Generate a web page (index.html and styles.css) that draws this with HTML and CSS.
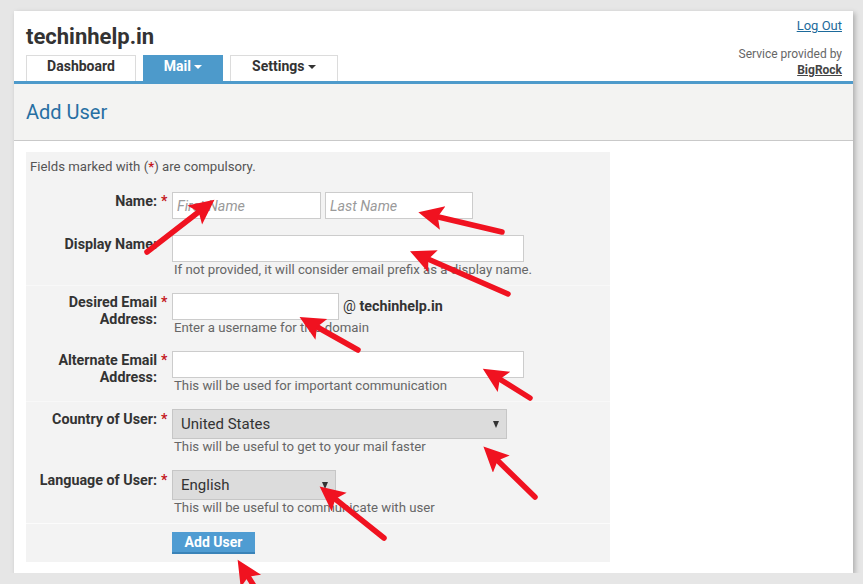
FILE: index.html
```html
<!DOCTYPE html>
<html lang="en">

<head>
    <meta charset="UTF-8">
    <meta name="viewport" content="width=device-width, initial-scale=1.0">
    <title>Add User</title>
    <link rel="stylesheet" href="styles.css">
</head>

<body>
    <div class="page">
        <div class="header">
            <div class="header-left">
                <div class="brand">techinhelp.in</div>
                <div class="tabs">
                    <a class="tab tab-dashboard">Dashboard</a>
                    <a class="tab tab-mail active">Mail <span class="caret"></span></a>
                    <a class="tab tab-settings">Settings <span class="caret"></span></a>
                </div>
            </div>
            <div class="header-right">
                <a class="logout">Log Out</a>
                <div class="service">Service provided by</div>
                <a class="provider">BigRock</a>
            </div>
        </div>

        <div class="title-bar">
            <h1>Add User</h1>
        </div>

        <div class="content">
            <form class="user-form">
                <p class="intro">Fields marked with (<span class="star">*</span>) are compulsory.</p>

                <div class="row">
                    <label class="label">Name:</label>
                    <span class="star">*</span>
                    <div class="field">
                        <input type="text" class="input w-name" placeholder="First Name">
                        <input type="text" class="input w-name-last" placeholder="Last Name">
                    </div>
                </div>

                <div class="row">
                    <label class="label">Display Name:</label>
                    <span class="star"></span>
                    <div class="field">
                        <input type="text" class="input w-wide">
                        <div class="hint">If not provided, it will consider email prefix as a display name.</div>
                    </div>
                </div>

                <div class="row sep">
                    <label class="label">Desired Email<br>Address:</label>
                    <span class="star">*</span>
                    <div class="field">
                        <input type="text" class="input w-user"><span class="domain">@ <b>techinhelp.in</b></span>
                        <div class="hint">Enter a username for this domain</div>
                    </div>
                </div>

                <div class="row">
                    <label class="label">Alternate Email<br>Address:</label>
                    <span class="star">*</span>
                    <div class="field">
                        <input type="text" class="input w-wide">
                        <div class="hint">This will be used for important communication</div>
                    </div>
                </div>

                <div class="row sep">
                    <label class="label label-select">Country of User:</label>
                    <span class="star star-select">*</span>
                    <div class="field">
                        <span class="select-wrap w-country">
                            <select class="select">
                                <option>United States</option>
                            </select>
                        </span>
                        <div class="hint">This will be useful to get to your mail faster</div>
                    </div>
                </div>

                <div class="row">
                    <label class="label label-select">Language of User:</label>
                    <span class="star star-select">*</span>
                    <div class="field">
                        <span class="select-wrap w-lang">
                            <select class="select">
                                <option>English</option>
                            </select>
                        </span>
                        <div class="hint">This will be useful to communicate with user</div>
                    </div>
                </div>

                <div class="row row-submit">
                    <span></span>
                    <span></span>
                    <div class="field">
                        <input type="submit" class="btn" value="Add User">
                    </div>
                </div>
            </form>
        </div>
    </div>

    <!-- red pointers drawn on top of the form -->
    <svg class="marks" width="863" height="584" viewBox="0 0 863 584">
        <defs>
            <marker id="head" markerUnits="userSpaceOnUse" markerWidth="28" markerHeight="26"
                refX="13" refY="12" orient="auto">
                <path d="M0,0 L25,12 L0,24 L5,12 z" fill="#f01220" />
            </marker>
        </defs>
        <g stroke="#f01220" stroke-width="5.5" stroke-linecap="round" marker-end="url(#head)">
            <line x1="147" y1="252" x2="205" y2="207" />
            <line x1="502" y1="232" x2="430" y2="215" />
            <line x1="508" y1="294" x2="421" y2="256" />
            <line x1="358" y1="350" x2="310" y2="323" />
            <line x1="530" y1="398" x2="493" y2="375" />
            <line x1="535" y1="497" x2="492" y2="455" />
            <line x1="384" y1="538" x2="329" y2="494" />
            <line x1="254" y1="586" x2="244" y2="570" />
        </g>
    </svg>
</body>

</html>
```

FILE: styles.css
```css
body {
    margin: 0;
    background-color: #e6e6e6;
    font-family: Roboto, "Liberation Sans", Arial, sans-serif;
    color: #333;
}

.page {
    margin: 11px 0 0 14px;
    width: 839px;
    height: 562px;
    background-color: #fff;
    box-shadow: 2px 2px 5px rgba(0, 0, 0, 0.25);
}

/* header */
.header {
    display: flex;
    justify-content: space-between;
    align-items: flex-start;
    padding: 0 11px 0 12px;
    border-bottom: 3px solid #4d9acb;
}

.header-left {
    padding-top: 13px;
}

.brand {
    font-size: 22px;
    font-weight: bold;
    line-height: 26px;
    color: #333;
}

.tabs {
    display: flex;
    gap: 7px;
    margin-top: 5px;
}

.tab {
    display: block;
    height: 26px;
    box-sizing: border-box;
    padding-bottom: 4px;
    line-height: 21px;
    text-align: center;
    font-size: 14px;
    font-weight: bold;
    color: #333;
    background-color: #fff;
    border: 1px solid #dcdcdc;
    border-bottom: none;
}

.tab-dashboard {
    width: 110px;
}

.tab-mail {
    width: 80px;
}

.tab-settings {
    width: 108px;
}

.tab.active {
    background-color: #4d9acb;
    border-color: #4d9acb;
    color: #fff;
}

.caret {
    display: inline-block;
    width: 0;
    height: 0;
    border-left: 4px solid transparent;
    border-right: 4px solid transparent;
    border-top: 4px solid currentColor;
    vertical-align: 2px;
}

.header-right {
    display: flex;
    flex-direction: column;
    align-items: flex-end;
    padding-top: 7px;
}

.logout {
    font-size: 13px;
    line-height: 16px;
    color: #1d6a9b;
    text-decoration: underline;
}

.service {
    margin-top: 12px;
    font-size: 12px;
    line-height: 16px;
    color: #666;
}

.provider {
    font-size: 12px;
    line-height: 16px;
    font-weight: bold;
    color: #444;
    text-decoration: underline;
}

/* page title */
.title-bar {
    height: 56px;
    background-color: #f3f3f2;
    border-bottom: 1px solid #c9c9c9;
    padding-left: 12px;
}

.title-bar h1 {
    margin: 0;
    font-size: 20px;
    font-weight: normal;
    line-height: 56px;
    color: #276fa3;
}

/* form */
.content {
    padding: 11px 0 0 12px;
}

.user-form {
    width: 584px;
    background-color: #f3f3f3;
}

.intro {
    margin: 0 0 9px;
    padding: 7px 4px 0;
    font-size: 13.2px;
    line-height: 16px;
    color: #555;
}

.star {
    color: #c4161c;
    font-weight: bold;
}

.row {
    display: grid;
    grid-template-columns: 131px 15px 1fr;
    padding: 8px 0;
}

.row.sep {
    border-top: 1px solid #f8f8f8;
    padding-top: 7px;
}

.label {
    padding-top: 1px;
    text-align: right;
    font-size: 14.3px;
    font-weight: bold;
    line-height: 17px;
    color: #333;
}

.row > .star {
    padding-top: 1px;
    padding-left: 4px;
    font-size: 14px;
    line-height: 17px;
}

.label-select,
.row > .star-select {
    padding-top: 2px;
}

.field {
    font-size: 0;
}

.input {
    height: 27px;
    box-sizing: border-box;
    margin: 0;
    padding: 2px 4px;
    border: 1px solid #cccccc;
    background-color: #fff;
    font-family: Roboto, "Liberation Sans", Arial, sans-serif;
    font-size: 14.3px;
    color: #333;
    vertical-align: top;
}

.input::placeholder {
    color: #9a9a9a;
    font-style: italic;
}

.w-name {
    width: 149px;
}

.w-name-last {
    width: 148px;
    margin-left: 4px;
}

.w-wide {
    width: 352px;
}

.w-user {
    width: 167px;
}

.domain {
    display: inline-block;
    margin-left: 4px;
    font-size: 14.3px;
    line-height: 27px;
    color: #333;
    vertical-align: top;
}

.hint {
    padding-left: 2px;
    font-size: 13.2px;
    line-height: 15px;
    color: #666;
}

.select-wrap {
    display: inline-block;
    position: relative;
    vertical-align: top;
}

.select-wrap::after {
    content: "";
    position: absolute;
    right: 8px;
    top: 12px;
    border-left: 3px solid transparent;
    border-right: 3px solid transparent;
    border-top: 7px solid #333;
}

.select {
    appearance: none;
    -webkit-appearance: none;
    width: 100%;
    height: 30px;
    margin: 0;
    padding: 0 8px;
    border: 1px solid #c6c6c6;
    border-radius: 0;
    background-color: #dcdcdc;
    font-family: Roboto, "Liberation Sans", Arial, sans-serif;
    font-size: 15px;
    color: #333;
}

.w-country {
    width: 335px;
}

.w-lang {
    width: 164px;
}

.row-submit {
    border-top: 1px solid #fbfbfb;
    padding-top: 8px;
}

.btn {
    width: 83px;
    height: 22px;
    margin: 0;
    padding: 0;
    border: none;
    border-bottom: 2px solid #3a83b8;
    background-color: #4f9cd2;
    color: #fff;
    font-family: Roboto, "Liberation Sans", Arial, sans-serif;
    font-size: 14px;
    font-weight: bold;
    cursor: pointer;
}

.marks {
    position: absolute;
    top: 0;
    left: 0;
    pointer-events: none;
}
```
